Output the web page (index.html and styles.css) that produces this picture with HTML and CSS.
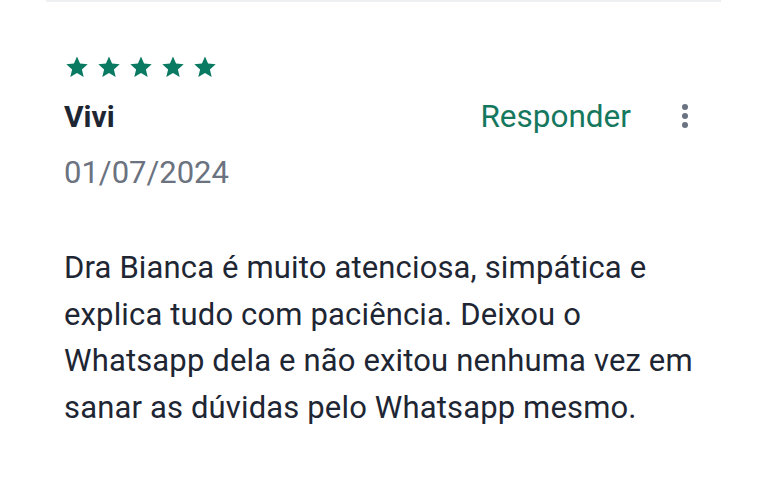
FILE: index.html
```html
<!DOCTYPE html>
<html lang="pt-BR">
<head>
    <meta charset="UTF-8">
    <meta name="viewport" content="width=device-width, initial-scale=1.0">
    <title>Avaliação</title>
    <link rel="stylesheet" href="styles.css">
</head>
<body>

    <div class="review">
        <!-- Estrelas -->
        <div class="stars">
            <svg class="star" viewBox="0 0 24 24"><path d="M12 1.5l3.1 7.1 7.6.7-5.8 5.1 1.8 7.6L12 18l-6.7 4 1.8-7.6-5.8-5.1 7.6-.7z"/></svg>
            <svg class="star" viewBox="0 0 24 24"><path d="M12 1.5l3.1 7.1 7.6.7-5.8 5.1 1.8 7.6L12 18l-6.7 4 1.8-7.6-5.8-5.1 7.6-.7z"/></svg>
            <svg class="star" viewBox="0 0 24 24"><path d="M12 1.5l3.1 7.1 7.6.7-5.8 5.1 1.8 7.6L12 18l-6.7 4 1.8-7.6-5.8-5.1 7.6-.7z"/></svg>
            <svg class="star" viewBox="0 0 24 24"><path d="M12 1.5l3.1 7.1 7.6.7-5.8 5.1 1.8 7.6L12 18l-6.7 4 1.8-7.6-5.8-5.1 7.6-.7z"/></svg>
            <svg class="star" viewBox="0 0 24 24"><path d="M12 1.5l3.1 7.1 7.6.7-5.8 5.1 1.8 7.6L12 18l-6.7 4 1.8-7.6-5.8-5.1 7.6-.7z"/></svg>
        </div>

        <div class="head">
            <span class="name">Vivi</span>
            <a class="reply" href="#">Responder</a>
            <svg class="more" viewBox="0 0 8 26">
                <circle cx="4" cy="4" r="3"/>
                <circle cx="4" cy="13" r="3"/>
                <circle cx="4" cy="22" r="3"/>
            </svg>
        </div>

        <div class="date">01/07/2024</div>

        <p class="text">Dra Bianca é muito atenciosa, simpática e explica tudo com paciência. Deixou o Whatsapp dela e não exitou nenhuma vez em sanar as dúvidas pelo Whatsapp mesmo.</p>
    </div>

</body>
</html>
```

FILE: styles.css
```css
body {
    font-family: Roboto, "Noto Sans", Arial, sans-serif;
    background: #fff;
    margin: 0;
}

.review {
    width: 675px;
    margin-left: 46px;
    padding: 0 18px;
    box-sizing: border-box;
    border-top: 2px solid #eeeff1;
}

.stars {
    display: flex;
    gap: 8px;
    margin-top: 53px;
    margin-left: 1px;
}

.star {
    width: 24px;
    height: 24px;
    fill: #0b7a62;
}

/* nome + responder + menu */
.head {
    display: flex;
    align-items: center;
    margin-top: 17px;
    height: 40px;
}

.name {
    flex: 1;
    font-size: 30px;
    font-weight: bold;
    color: #1e2633;
}

.reply {
    font-size: 31.5px;
    color: #15785e;
    text-decoration: none;
}

.more {
    width: 8px;
    height: 26px;
    fill: #6b7280;
    margin-left: 50px;
    margin-right: 14px;
}

.date {
    font-size: 31px;
    line-height: 40px;
    color: #6b7280;
    margin-top: 17px;
}

.text {
    font-size: 31px;
    letter-spacing: 0.15px;
    line-height: 46.5px;
    color: #1e2633;
    margin: 52px 0 0;
}
```
